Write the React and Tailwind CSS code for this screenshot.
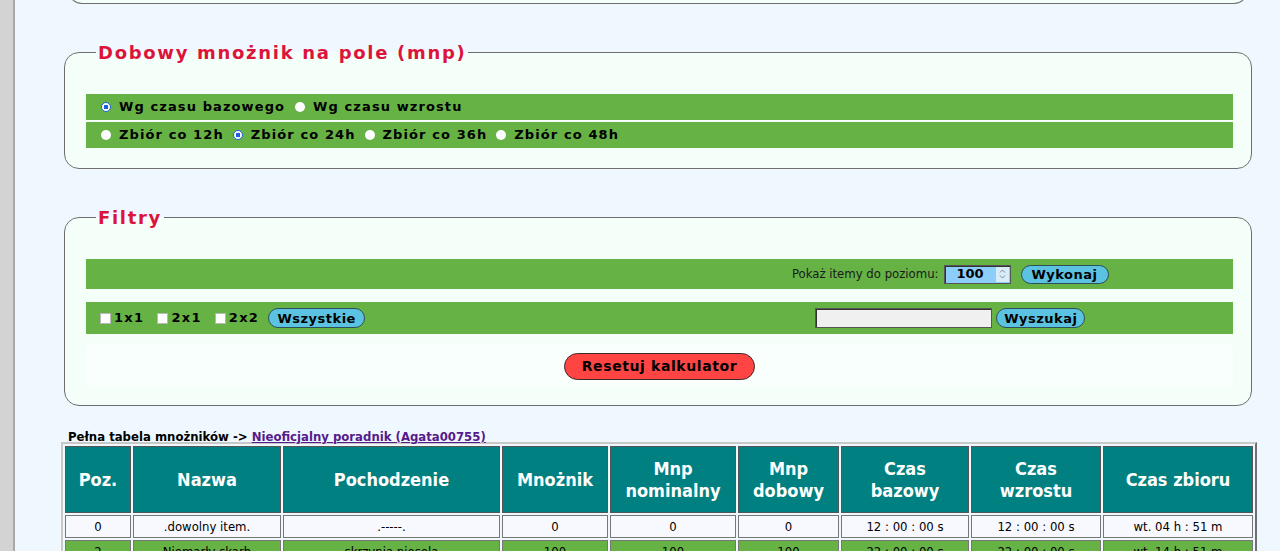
import React from 'react';

const verdana = { fontFamily: '"DejaVu Sans", Verdana, sans-serif' };
const tahoma = { fontFamily: '"DejaVu Sans Condensed", "Liberation Sans", Tahoma, sans-serif' };

const Radio = ({ checked }) => (
  <span
    className={
      'inline-block w-[10px] h-[10px] rounded-full shrink-0 ' +
      (checked ? 'bg-white border border-[#1a5fd6] shadow-[inset_0_0_0_1.5px_#fff] bg-[radial-gradient(circle,#1a5fd6_0_2.2px,#fff_2.6px)]' : 'bg-white')
    }
  />
);

const Check = () => <span className="inline-block w-[11px] h-[11px] bg-white border border-[#b8b8b8] shrink-0" />;

const PillButton = ({ children, className = '' }) => (
  <button
    className={
      'rounded-full bg-[#5bc2e2] border border-[#2c4f5c] text-[13px] font-bold tracking-[0.5px] text-black leading-none ' +
      className
    }
    style={verdana}
  >
    {children}
  </button>
);

const Legend = ({ children }) => (
  <legend className="ml-[10px] px-[2px] text-[18px] font-bold tracking-[1.7px] text-[#dc143c] leading-[21px]" style={verdana}>
    {children}
  </legend>
);

const columns = [
  { label: ['Poz.'], w: 'w-[66px]' },
  { label: ['Nazwa'], w: 'w-[148px]' },
  { label: ['Pochodzenie'], w: 'w-[217px]' },
  { label: ['Mnożnik'], w: 'w-[106px]' },
  { label: ['Mnp', 'nominalny'], w: 'w-[126px]' },
  { label: ['Mnp', 'dobowy'], w: 'w-[101px]' },
  { label: ['Czas', 'bazowy'], w: 'w-[128px]' },
  { label: ['Czas', 'wzrostu'], w: 'w-[130px]' },
  { label: ['Czas zbioru'], w: 'w-[150px]' },
];

const rows = [
  { bg: 'bg-[#f8f8ff]', cells: ['0', '.dowolny item.', '.-----.', '0', '0', '0', '12 : 00 : 00 s', '12 : 00 : 00 s', 'wt. 04 h : 51 m'] },
  { bg: 'bg-[#66b245]', cells: ['2', 'Niemarły skarb', 'skrzynia piesela', '100', '100', '100', '22 : 00 : 00 s', '22 : 00 : 00 s', 'wt. 14 h : 51 m'] },
];

export default function App() {
  return (
    <div className="flex min-h-[551px] bg-[#f0f8ff] overflow-hidden">
      <div className="w-[15px] shrink-0 bg-[#d3d3d3] border-r-2 border-[#a9a9a9]" />
      <div className="flex-1 min-w-0 pl-[49px] pr-[28px]">
        {/* tail of the previous box */}
        <div className="mt-[-16px] h-[20px] mx-[4px] border border-t-0 border-[#6e6e6e] rounded-b-[14px] bg-[#f5fffa]" />

        <fieldset className="mt-[38px] border border-[#6e6e6e] rounded-[15px] bg-[#f5fffa] pl-[21px] pr-[18px] pt-[31px] pb-[20px]">
          <Legend>Dobowy mnożnik na pole (mnp)</Legend>
          <div className="flex flex-col gap-[2px] text-[13px] font-bold tracking-[1.1px] text-black" style={verdana}>
            <div className="h-[26px] bg-[#66b245] flex items-center pl-[15px] gap-[10px]">
              <span className="flex items-center gap-[8px]"><Radio checked />Wg czasu bazowego</span>
              <span className="flex items-center gap-[8px]"><Radio />Wg czasu wzrostu</span>
            </div>
            <div className="h-[26px] bg-[#66b245] flex items-center pl-[15px] gap-[9px]">
              <span className="flex items-center gap-[8px]"><Radio />Zbiór co 12h</span>
              <span className="flex items-center gap-[8px]"><Radio checked />Zbiór co 24h</span>
              <span className="flex items-center gap-[8px]"><Radio />Zbiór co 36h</span>
              <span className="flex items-center gap-[8px]"><Radio />Zbiór co 48h</span>
            </div>
          </div>
        </fieldset>

        <fieldset className="mt-[38px] border border-[#6e6e6e] rounded-[15px] bg-[#f5fffa] pl-[21px] pr-[18px] pt-[31px] pb-[18px]">
          <Legend>Filtry</Legend>
          <div className="flex flex-col">
            <div className="h-[30px] bg-[#66b245] grid grid-cols-2">
              <div />
              <div className="flex items-center justify-center gap-[10px] pl-[8px]">
                <span className="text-[13px] text-[#1a1a1a] flex items-center gap-[5px]" style={tahoma}>
                  Pokaż itemy do poziomu:
                  <span className="relative inline-flex items-center h-[19px] w-[67px] bg-[#8ccdf9] border border-[#555] shadow-[inset_1px_1px_0_#333]">
                    <span className="flex-1 text-center text-[13px] font-bold text-black" style={verdana}>100</span>
                    <span className="w-[13px] h-[15px] mr-[1px] bg-[#d9ecf9] flex flex-col items-center justify-center">
                      <svg width="7" height="12" viewBox="0 0 7 12">
                        <path d="M1 4.5 L3.5 2 L6 4.5" fill="none" stroke="#888" strokeWidth="1" />
                        <path d="M1 7.5 L3.5 10 L6 7.5" fill="none" stroke="#888" strokeWidth="1" />
                      </svg>
                    </span>
                  </span>
                </span>
                <PillButton className="h-[19px] w-[88px]">Wykonaj</PillButton>
              </div>
            </div>
            <div className="mt-[13px] h-[32px] bg-[#66b245] grid grid-cols-2">
              <div className="flex items-center pl-[14px] text-[13px] font-bold tracking-[1.3px] text-black" style={verdana}>
                <span className="flex items-center gap-[3px]"><Check />1x1</span>
                <span className="flex items-center gap-[3px] ml-[13px]"><Check />2x1</span>
                <span className="flex items-center gap-[3px] ml-[13px]"><Check />2x2</span>
                <PillButton className="ml-[9px] h-[20px] w-[97px]">Wszystkie</PillButton>
              </div>
              <div className="flex items-center justify-center gap-[4px] pl-[8px]">
                <span className="h-[20px] w-[177px] bg-[#f0f0f0] border border-[#555] shadow-[inset_1px_1px_0_#333]" />
                <PillButton className="h-[20px] w-[89px]">Wyszukaj</PillButton>
              </div>
            </div>
            <div className="mt-[11px] h-[42px] bg-[#f8fffc] flex items-center justify-center">
              <button
                className="h-[27px] w-[191px] rounded-full bg-[#ff4444] border border-[#3a2a2a] text-[14px] font-bold tracking-[0.6px] text-black"
                style={verdana}
              >
                Resetuj kalkulator
              </button>
            </div>
          </div>
        </fieldset>

        <div className="mt-[23px] ml-[4px] text-[13px] font-bold text-black leading-[15px]" style={tahoma}>
          Pełna tabela mnożników -&gt;{' '}
          <a href="#" className="text-[#551a8b] underline">Nieoficjalny poradnik (Agata00755)</a>
        </div>

        <table
          className="mt-[-2px] -ml-[3px] table-fixed border-separate border-spacing-[2px] border-2 border-t-[#c8c8c8] border-l-[#c8c8c8] border-r-[#6f6f6f] border-b-[#6f6f6f] w-[1196px]"
          style={tahoma}
        >
          <thead>
            <tr>
              {columns.map((c) => (
                <th
                  key={c.label.join(' ')}
                  className={c.w + ' h-[67px] bg-[#008080] text-white text-[18px] font-bold leading-[22px] border border-[#555] p-0'}
                >
                  {c.label.map((l) => (
                    <div key={l}>{l}</div>
                  ))}
                </th>
              ))}
            </tr>
          </thead>
          <tbody>
            {rows.map((r, i) => (
              <tr key={i}>
                {r.cells.map((c, j) => (
                  <td key={j} className={r.bg + ' h-[23px] text-center text-[13px] text-black border border-[#777] p-0'}>
                    {c}
                  </td>
                ))}
              </tr>
            ))}
          </tbody>
        </table>
      </div>
    </div>
  );
}
